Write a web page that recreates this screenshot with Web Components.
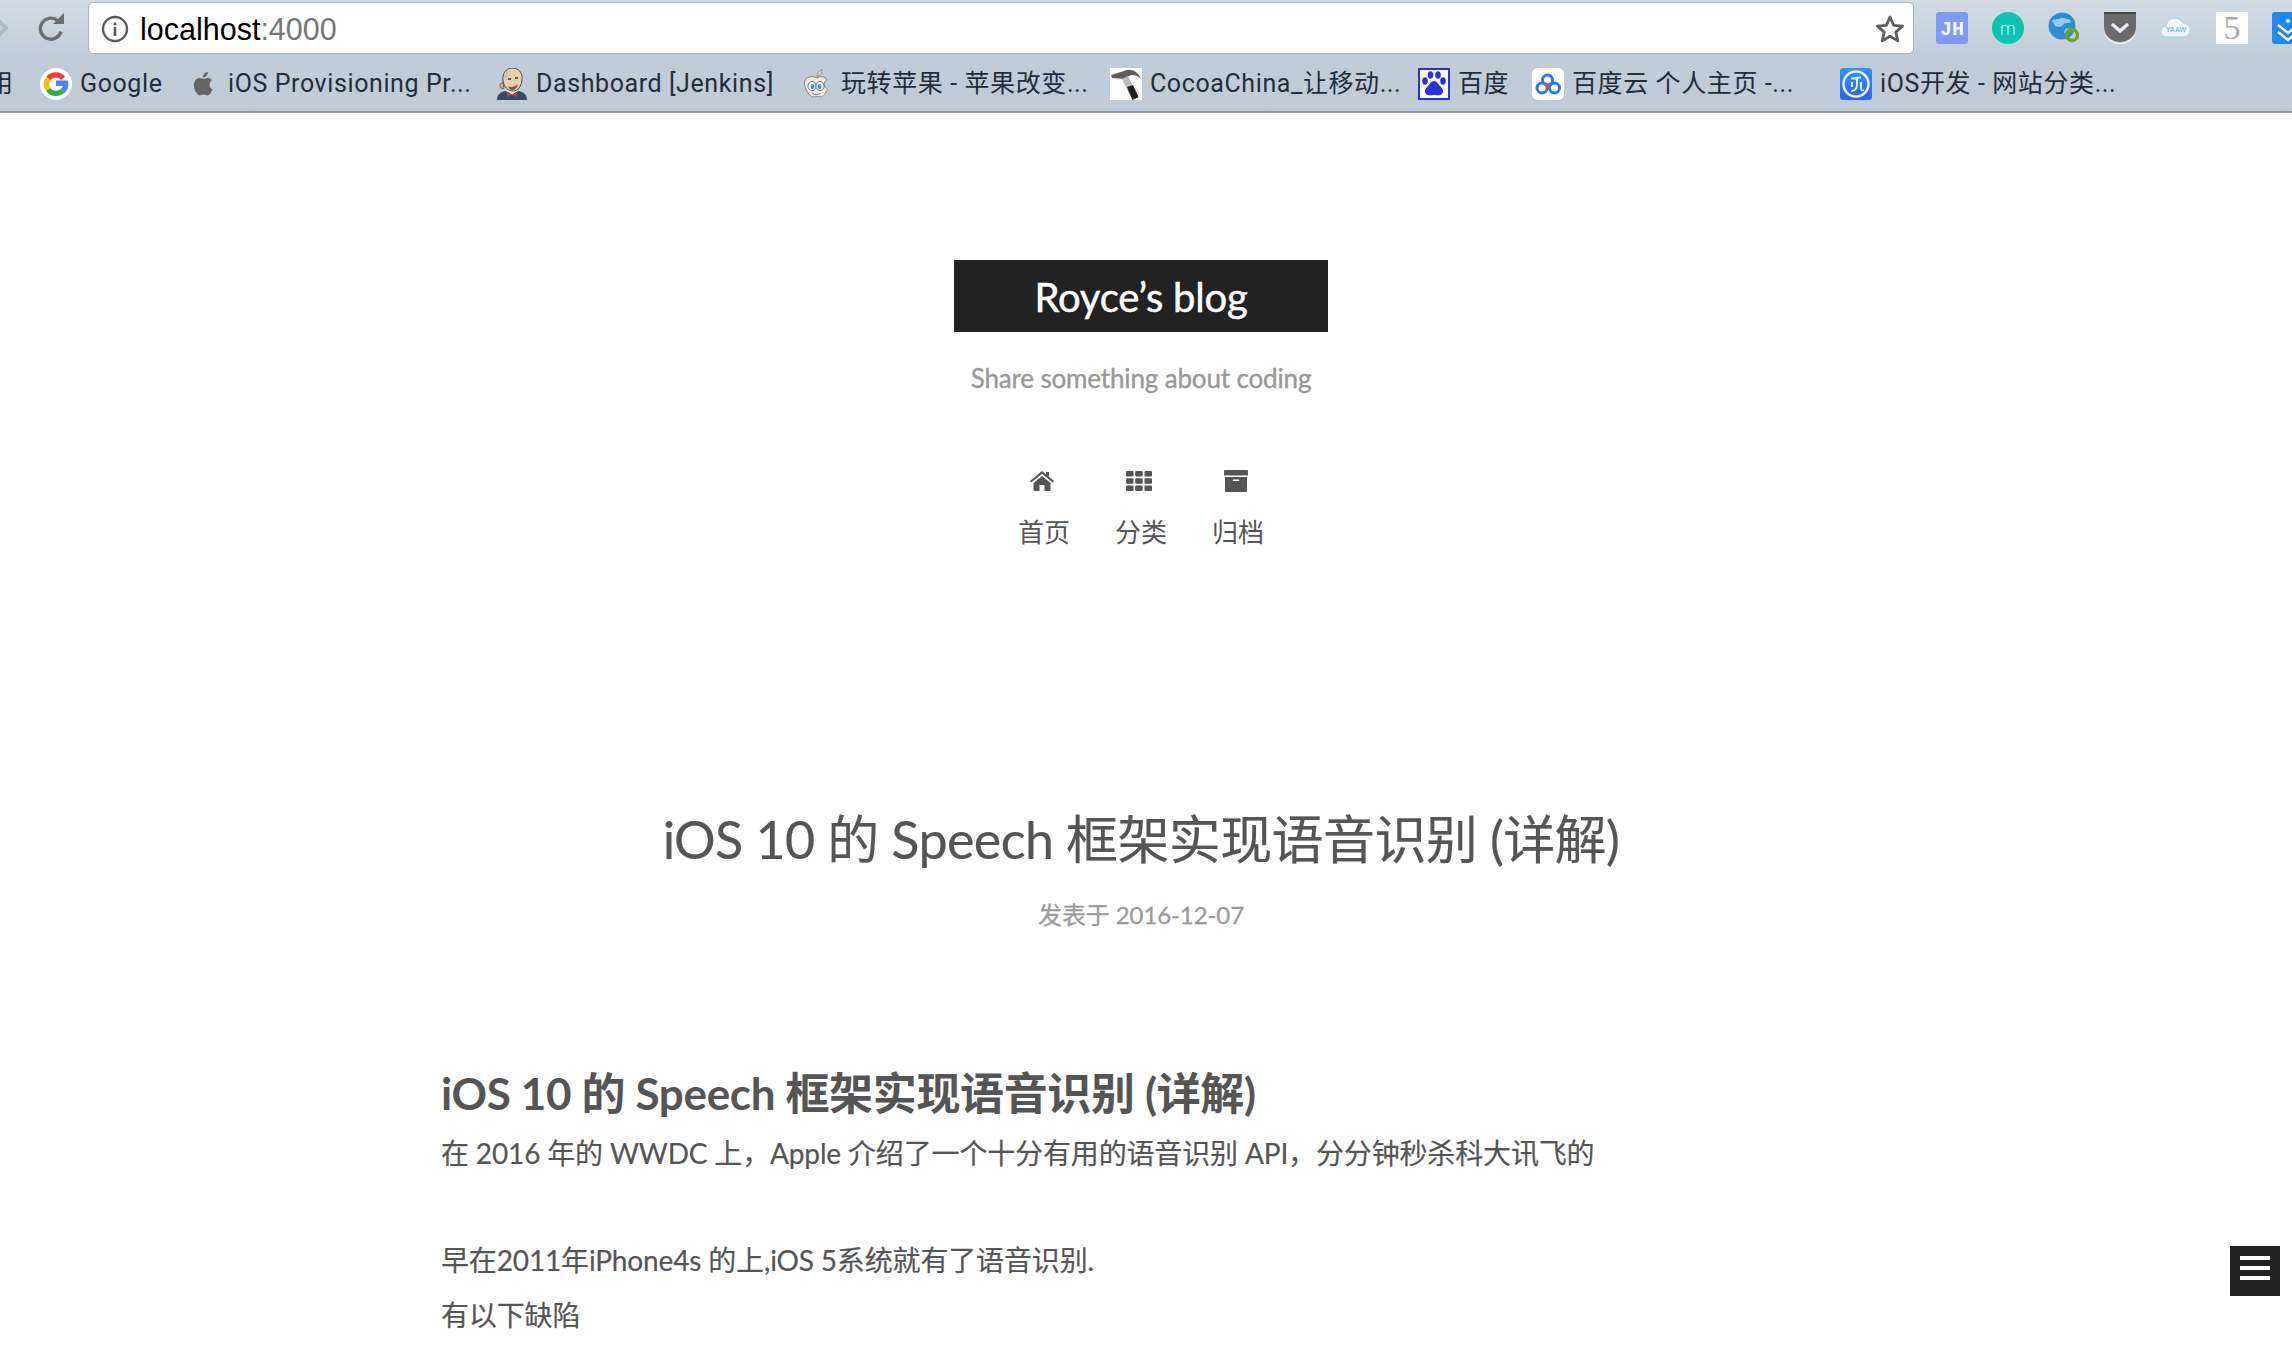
<!DOCTYPE html>
<html lang="zh">
<head>
<meta charset="utf-8">
<title>Royce's blog</title>
<style>
html, body { margin: 0; height: 100%; overflow: hidden; background: #fff; }
body { width: 2292px; height: 1352px; position: relative; font-family: Lato, "Noto Sans CJK SC", sans-serif; }
</style>
</head>
<body>

<browser-chrome>
  <bookmark-item label="用" icon="none" style="margin-left:-12px;width:52px"></bookmark-item>
  <bookmark-item label="Google" icon="google" style="width:148px"></bookmark-item>
  <bookmark-item label="iOS Provisioning Pr..." icon="apple" style="width:308px"></bookmark-item>
  <bookmark-item label="Dashboard [Jenkins]" icon="jenkins" style="width:305px"></bookmark-item>
  <bookmark-item label="玩转苹果 - 苹果改变..." icon="apple2" style="width:309px"></bookmark-item>
  <bookmark-item label="CocoaChina_让移动..." icon="hammer" style="width:308px"></bookmark-item>
  <bookmark-item label="百度" icon="baidu" style="width:114px"></bookmark-item>
  <bookmark-item label="百度云 个人主页 -..." icon="yun" style="width:308px"></bookmark-item>
  <bookmark-item label="iOS开发 - 网站分类..." icon="ios" style="width:300px"></bookmark-item>
</browser-chrome>

<site-header>
  <nav-item label="首页" icon="home"></nav-item>
  <nav-item label="分类" icon="grid"></nav-item>
  <nav-item label="归档" icon="archive"></nav-item>
</site-header>

<post-article>
  <span slot="title">iOS 10 的 Speech 框架实现语音识别 (详解)</span>
  <span slot="meta">发表于 2016-12-07</span>
  <h1>iOS 10 的 Speech 框架实现语音识别 (详解)</h1>
  <p>在 2016 年的 WWDC 上，Apple 介绍了一个十分有用的语音识别 API，分分钟秒杀科大讯飞的</p>
  <p class="gap">早在2011年iPhone4s 的上,iOS 5系统就有了语音识别.</p>
  <p>有以下缺陷</p>
</post-article>

<menu-toggle></menu-toggle>

<script>
// favicons of the bookmarks bar
const ICONS = {
    none: '',
    google: '<svg viewBox="0 0 32 32" width="32" height="32" fill="none" stroke-width="5.400"><circle cx="16" cy="16" r="16" fill="#fff"/><path d="M23 10.200A9.600 9.600 0 0 0 8.300 10.500" stroke="#ea4335"/><path d="M8.300 10.500a9.600 9.600 0 0 0 0 11" stroke="#fbbc05"/><path d="M8.300 21.500A9.600 9.600 0 0 0 22.500 23" stroke="#34a853"/><path d="M22.500 23c2.400-1.900 3.500-4.600 3.100-7.800H16" stroke="#4285f4"/></svg>',
    apple: '<svg viewBox="0 0 32 32" width="32" height="32"><path d="M21.500 16.800c0-3 2.400-4.400 2.500-4.500-1.400-2-3.500-2.300-4.200-2.300-1.800-.2-3.500 1-4.400 1-.9 0-2.300-1-3.800-1-2 0-3.800 1.100-4.800 2.900-2 3.500-.5 8.800 1.500 11.700 1 1.400 2.100 3 3.600 2.900 1.500-.1 2-.9 3.800-.9 1.800 0 2.200.9 3.800.9 1.600 0 2.600-1.400 3.500-2.900 1.100-1.600 1.600-3.200 1.600-3.300-.1 0-3.100-1.200-3.100-4.500z" fill="#666"/><path d="M18.600 7.800c.8-1 1.400-2.400 1.200-3.800-1.200.1-2.600.8-3.500 1.800-.8.900-1.400 2.300-1.200 3.700 1.300.1 2.700-.7 3.500-1.700z" fill="#666"/></svg>',
    jenkins: '<svg viewBox="0 0 32 32" width="32" height="32"><path d="M1 32c0-6 4-8 8-9l7 2 7-2c4 1 8 3 8 9z" fill="#2f4f63"/><path d="M11 23l5 4 5-4-1-2h-8z" fill="#f2e3d0"/><path d="M11 29l5-2.500 5 2.500v-5l-5 2.500-5-2.500z" fill="#d33833"/><path d="M7 13C6 6 10 0 16 0c6 0 11 4 10 12-.5 6-4 11-9 11-5 0-9-4-10-10z" fill="#eccfae" stroke="#4a4a4a" stroke-width="1"/><path d="M7 15c-3-1-4 3-2 5 1 1 3 1 3 0z" fill="#d9a889" stroke="#4a4a4a" stroke-width=".8"/><path d="M8 10c1-5 4-8 8-9-4 3-5 6-5 9z" fill="#bfc3c6"/><path d="M12 18c3 2 7 1 10-2-1 4-3 6-5.500 6S13 20.500 12 18z" fill="#8c4f3a"/><path d="M12 11h3M19 10h3" stroke="#333" stroke-width="1.400"/></svg>',
    apple2: '<svg viewBox="0 0 32 32" width="32" height="32"><path d="M16 10c3-2 8-2 10 2-2 1-3 3-3 5 0 2 2 3 3.500 4-1.500 4-4 8-7 8-1.500 0-2.500-.8-3.500-.8s-2 .8-3.500.8c-4 0-9-8-9-14 0-6 8-8 12.500-5z" fill="#e9e9e6" stroke="#85857f" stroke-width="1"/><path d="M16 8.500c0-3 2-6 5-7 .5 3-2 6-5 7z" fill="#dcdcd8" stroke="#85857f" stroke-width=".8"/><ellipse cx="11" cy="18" rx="4" ry="4.500" fill="#fff" stroke="#666" stroke-width=".9"/><ellipse cx="19" cy="18" rx="4" ry="4.500" fill="#fff" stroke="#666" stroke-width=".9"/><ellipse cx="11.500" cy="18.500" rx="2" ry="2.600" fill="#3a8fd6"/><ellipse cx="18.500" cy="18.500" rx="2" ry="2.600" fill="#3a8fd6"/><path d="M11 25.500c3 1.200 6 1.200 8.500 0" fill="none" stroke="#777"/></svg>',
    hammer: '<svg viewBox="0 0 32 32" width="32" height="32"><rect width="32" height="32" fill="#fff"/><path d="M1 7L14 3C20 0 28 3 31 11 27 7 22 6 19 8L14 11 2 10z" fill="#5e5e5e"/><path d="M12 11l6-3 10 21-6 3z" fill="#bdbdbd"/><path d="M17 19l6-2 5.500 12-6 3z" fill="#1e1e1e"/></svg>',
    baidu: '<svg viewBox="0 0 32 32" width="32" height="32"><rect width="32" height="32" fill="#2932e1"/><rect x="2" y="2" width="28" height="28" fill="#fff"/><g fill="#2932e1"><ellipse cx="7" cy="13" rx="2.800" ry="3.700"/><ellipse cx="12.500" cy="7" rx="2.800" ry="3.800"/><ellipse cx="20" cy="7" rx="2.800" ry="3.800"/><ellipse cx="25" cy="13" rx="2.800" ry="3.700"/><path d="M16 13c3 0 4 3 6 5 3 3 4 5 2 8-2 2-5 1-8 1s-6 1-8-1c-2-3-1-5 2-8 2-2 3-5 6-5z"/></g></svg>',
    yun: '<svg viewBox="0 0 32 32" width="32" height="32"><rect width="32" height="32" rx="6" fill="#fff"/><g fill="none" stroke="#2e78e6" stroke-width="3"><circle cx="10" cy="20" r="5"/><circle cx="22.500" cy="20" r="5"/><circle cx="15.500" cy="12" r="5"/></g><path d="M12.500 14l4.500 2.500-1.500 5z" fill="#e8453c"/></svg>',
    ios: '<svg viewBox="0 0 32 32" width="32" height="32"><defs><linearGradient id="ig" x1="0" y1="0" x2="0" y2="1"><stop offset="0" stop-color="#2a9af5"/><stop offset="1" stop-color="#2a62f5"/></linearGradient></defs><rect width="32" height="32" rx="3" fill="url(#ig)"/><circle cx="16" cy="16" r="12.500" fill="none" stroke="#eef3fa" stroke-width="2.400"/><path d="M11 10.500l10-1M17 10v7c0 4-3 6-6 6M12 14v5M21 14v6c0 2 1 3 3 2" fill="none" stroke="#eef3fa" stroke-width="1.900"/></svg>'
};

const NAV_ICONS = {
    home: '<svg viewBox="0 0 24 20" width="24" height="20"><path d="M12 0 L16 3.300V1h3v4.800L24 10l-1.300 1.500L12 2.800 1.300 11.500 0 10z" fill="#555"/><path d="M12 5l8.500 7v7a1 1 0 0 1-1 1H14.500v-6h-5v6H4.500a1 1 0 0 1-1-1v-7z" fill="#555"/></svg>',
    grid: '<svg viewBox="0 0 26 20" width="26" height="20" fill="#555"><rect x="0" y="0" width="7.500" height="5.600" rx="1"/><rect x="9.200" y="0" width="7.500" height="5.600" rx="1"/><rect x="18.500" y="0" width="7.500" height="5.600" rx="1"/><rect x="0" y="7.200" width="7.500" height="5.600" rx="1"/><rect x="9.200" y="7.200" width="7.500" height="5.600" rx="1"/><rect x="18.500" y="7.200" width="7.500" height="5.600" rx="1"/><rect x="0" y="14.400" width="7.500" height="5.600" rx="1"/><rect x="9.200" y="14.400" width="7.500" height="5.600" rx="1"/><rect x="18.500" y="14.400" width="7.500" height="5.600" rx="1"/></svg>',
    archive: '<svg viewBox="0 0 24 22" width="24" height="22" fill="#555"><rect x="0" y="0" width="24" height="5.500" rx=".8"/><path fill-rule="evenodd" d="M1 7h22v14a1 1 0 0 1-1 1H2a1 1 0 0 1-1-1zM9.500 9.500a.8.8 0 0 0 0 1.600h5a.8.8 0 0 0 0-1.600z"/></svg>'
};

class BrowserChrome extends HTMLElement {
    constructor() {
        super();
        const shadow = this.attachShadow({mode: 'open'});
        shadow.innerHTML = `
        <style>
        :host { display: block; height: 113px; box-sizing: border-box; border-bottom: 2px solid #8c99a6;
            background: linear-gradient(#d3dce5 0, #c0ccd8 56px, #bfcbd7 100%); overflow: hidden;
            font-family: Roboto, "Noto Sans CJK SC", sans-serif; }
        .top { height: 55px; display: flex; align-items: flex-start; box-sizing: border-box; }
        .nav { width: 88px; flex: none; display: flex; align-items: center; height: 56px; }
        .nav .fwd { margin-left: -6px; flex: none; }
        .nav .reload { margin-left: 27px; flex: none; }
        .url { width: 1826px; height: 52px; margin-top: 2px; box-sizing: border-box; flex: none; background: #fff;
            border: 1px solid #a8b0b8; border-radius: 5px; display: flex; align-items: center; padding: 2px 8px 0 12px;
            font-family: "Liberation Sans", sans-serif; font-size: 30.500px; color: #000; }
        .url .info { margin-right: 11px; flex: none; }
        .url .port { color: #777; }
        .url .star { margin-left: auto; }
        .ext { display: flex; align-items: center; height: 56px; margin-left: 22px; gap: 24px; flex: none; }
        .ext svg { flex: none; display: block; }
        .bar { display: flex; align-items: center; height: 56px; box-sizing: border-box; padding-top: 2px; white-space: nowrap; }
        </style>
        <div class="top">
          <div class="nav">
            <svg class="fwd" width="14" height="24" viewBox="0 0 14 24"><path d="M2 2l10 10L2 22" fill="none" stroke="#aeb8c2" stroke-width="4"/></svg>
            <svg class="reload" width="32" height="32" viewBox="0 0 32 32"><path d="M26 19.500A10.500 10.500 0 1 1 22.500 8.500" fill="none" stroke="#6e6e6e" stroke-width="3.400"/><path d="M18 12h11V1z" fill="#6e6e6e"/></svg>
          </div>
          <div class="url">
            <svg class="info" width="28" height="28" viewBox="0 0 28 28"><circle cx="14" cy="14" r="12" fill="none" stroke="#5a5a5a" stroke-width="2.400"/><rect x="12.700" y="12" width="2.600" height="9" fill="#5a5a5a"/><rect x="12.700" y="7.500" width="2.600" height="2.800" fill="#5a5a5a"/></svg>
            <span>localhost<span class="port">:4000</span></span>
            <svg class="star" width="30" height="30" viewBox="0 0 30 30"><path d="M15 3l3.600 8.300 9 .8-6.800 6 2 8.800L15 22.300 7.200 26.900l2-8.800-6.800-6 9-.8z" fill="none" stroke="#5f5f5f" stroke-width="2.800" stroke-linejoin="round"/></svg>
          </div>
          <div class="ext">
            <svg width="32" height="32" viewBox="0 0 32 32"><rect width="32" height="32" rx="3" fill="#7b9cf2"/><text x="16" y="23" text-anchor="middle" font-family="Liberation Mono" font-weight="700" font-size="20" fill="#f4f6fd">JH</text></svg>
            <svg width="32" height="32" viewBox="0 0 32 32"><circle cx="16" cy="16" r="16" fill="#0cc4b4"/><path d="M10 23V13M10 16c0-3 6-4 6 0v7M16 16c0-3 6-4 6 0v7" fill="none" stroke="#bff3ec" stroke-width="1.200"/></svg>
            <svg width="32" height="32" viewBox="0 0 32 32"><circle cx="14" cy="14" r="13.500" fill="#2e8bd6"/><path d="M4 9c4-3 6-1 9-3 3-1 5 2 8 1l2 3c-3 2-6 0-8 3-2 2-5 3-8 1zM17 17c2-1 4-1 5 0l-3 5-3-1z" fill="#8fd0ef"/><circle cx="24" cy="23" r="5.500" fill="none" stroke="#6aa527" stroke-width="3.400"/></svg>
            <svg width="32" height="32" viewBox="0 0 32 32"><path d="M0 1h32v14a16 15 0 0 1-32 0z" fill="#6b6b6b"/><rect y="0" width="32" height="2" fill="#444"/><path d="M0 17a16 14 0 0 0 32 0v1a16 14 0 0 1-32 0z" fill="#fff"/><path d="M8 12l8 7 8-7" fill="none" stroke="#e8ecf2" stroke-width="3.400"/></svg>
            <svg width="32" height="32" viewBox="0 0 32 32"><path d="M7 25a5.500 5.500 0 0 1-1-11 9 9 0 0 1 17-3 7 7 0 0 1 1 14z" fill="#f2f6f8" stroke="#a6dcf2" stroke-width="1.400"/><text x="16" y="20" text-anchor="middle" font-family="Liberation Sans" font-weight="700" font-size="7" fill="#7fc6e6">YAAW</text></svg>
            <svg width="32" height="32" viewBox="0 0 32 32"><rect width="32" height="32" fill="#fff"/><text x="16" y="27" text-anchor="middle" font-family="Liberation Serif" font-size="34" fill="#aaa">5</text></svg>
            <svg width="32" height="32" viewBox="0 0 32 32"><rect width="32" height="32" rx="3" fill="#1e88f5"/><path d="M6 13l10 8 10-8M6 20l10 8 10-8" fill="none" stroke="#fff" stroke-width="2.400"/><circle cx="16" cy="9" r="2" fill="#fff"/></svg>
          </div>
        </div>
        <div class="bar"><slot></slot></div>`;
    }
}
customElements.define('browser-chrome', BrowserChrome);

class BookmarkItem extends HTMLElement {
    constructor() {
        super();
        const shadow = this.attachShadow({mode: 'open'});
        const icon = ICONS[this.getAttribute('icon')] || '';
        shadow.innerHTML = `
        <style>
        :host { display: flex; align-items: center; flex: none; gap: 8px; box-sizing: border-box; color: #1f2d3d;
            font-size: 25px; line-height: 32px; letter-spacing: .6px; }
        svg { display: block; flex: none; }
        </style>
        ${icon}<span>${this.getAttribute('label')}</span>`;
    }
}
customElements.define('bookmark-item', BookmarkItem);

class SiteHeader extends HTMLElement {
    constructor() {
        super();
        const shadow = this.attachShadow({mode: 'open'});
        shadow.innerHTML = `
        <style>
        :host { display: flex; flex-direction: column; align-items: center; width: 2282px; padding-top: 147px; }
        .brand { background: #222; color: #fff; width: 374px; height: 72px; box-sizing: border-box; padding-top: 2px;
            display: flex; align-items: center; justify-content: center;
            font-size: 40px; letter-spacing: -.2px; -webkit-text-stroke: .5px #fff; }
        .sub { margin-top: 28px; font-size: 26px; line-height: 36px; color: #999; letter-spacing: -.15px; -webkit-text-stroke: .4px #999; }
        nav { display: flex; margin-top: 74px; }
        </style>
        <div class="brand">Royce’s blog</div>
        <div class="sub">Share something about coding</div>
        <nav><slot></slot></nav>`;
    }
}
customElements.define('site-header', SiteHeader);

class NavItem extends HTMLElement {
    constructor() {
        super();
        const shadow = this.attachShadow({mode: 'open'});
        shadow.innerHTML = `
        <style>
        :host { display: flex; flex-direction: column; width: 97px; align-items: center; color: #555; font-size: 26px; }
        .ic { height: 22px; display: flex; align-items: center; justify-content: center; margin-left: -4px; }
        .lb { margin-top: 22px; line-height: 36px; }
        </style>
        <div class="ic">${NAV_ICONS[this.getAttribute('icon')]}</div>
        <div class="lb">${this.getAttribute('label')}</div>`;
    }
}
customElements.define('nav-item', NavItem);

class PostArticle extends HTMLElement {
    constructor() {
        super();
        const shadow = this.attachShadow({mode: 'open'});
        shadow.innerHTML = `
        <style>
        :host { display: block; width: 1400px; margin-left: 441px; margin-top: 253px; color: #555; }
        header { width: 1400px; text-align: center; }
        .title { font-size: 52px; line-height: 72px; letter-spacing: -.6px; -webkit-text-stroke: .2px #555; }
        .meta { font-size: 24px; line-height: 36px; margin-top: 22px; color: #999; letter-spacing: -.1px; -webkit-text-stroke: .3px #999; }
        .body { margin-top: 130px; }
        ::slotted(h1) { margin: 0 0 3px; font-size: 44px; line-height: 60px; font-weight: 700; letter-spacing: -.35px; }
        ::slotted(p) { margin: 0; font-size: 28px; line-height: 55px; letter-spacing: -.15px; -webkit-text-stroke: .2px #555; }
        ::slotted(p.gap) { margin-top: 52px; }
        </style>
        <header>
          <div class="title"><slot name="title"></slot></div>
          <div class="meta"><slot name="meta"></slot></div>
        </header>
        <div class="body"><slot></slot></div>`;
    }
}
customElements.define('post-article', PostArticle);

class MenuToggle extends HTMLElement {
    constructor() {
        super();
        const shadow = this.attachShadow({mode: 'open'});
        shadow.innerHTML = `
        <style>
        :host { position: absolute; left: 2230px; top: 1246px; width: 50px; height: 50px; background: #222;
            display: flex; flex-direction: column; align-items: center; gap: 6px; padding-top: 10px; box-sizing: border-box; }
        i { display: block; width: 30px; height: 4px; background: #fff; }
        </style>
        <i></i><i></i><i></i>`;
    }
}
customElements.define('menu-toggle', MenuToggle);
</script>
</body>
</html>
